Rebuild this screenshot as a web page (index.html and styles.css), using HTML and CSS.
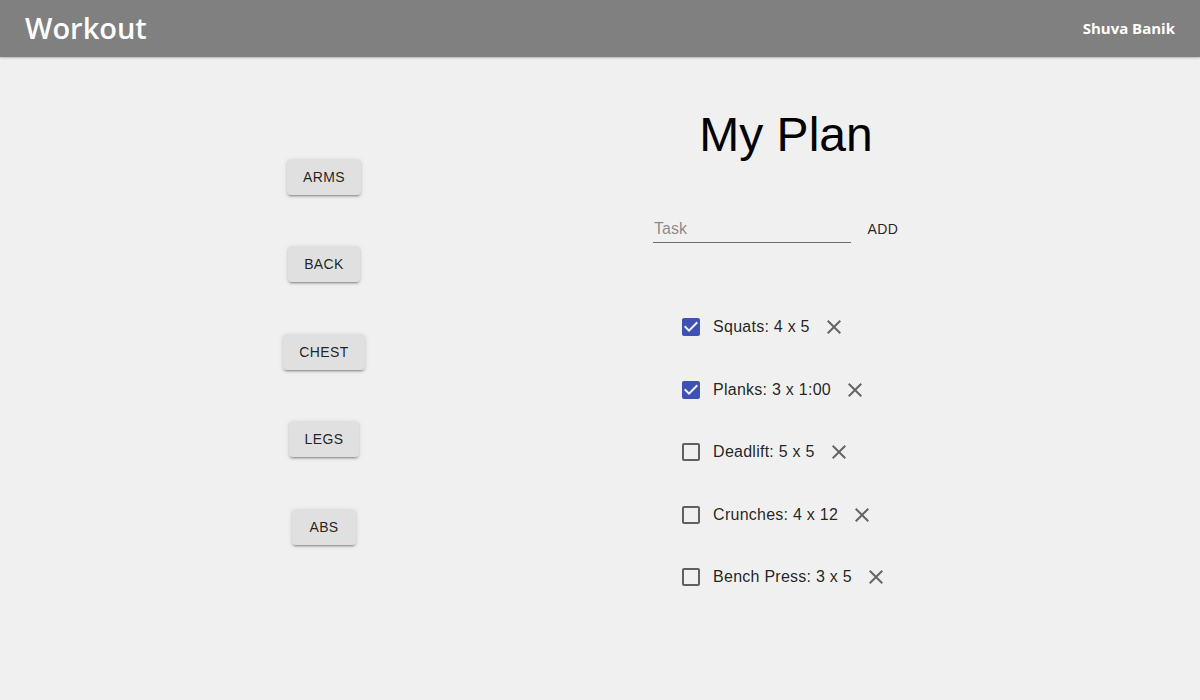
FILE: index.html
```html
<!DOCTYPE html>
<html lang="en">
<head>
<meta charset="utf-8">
<title>Workout</title>
<link rel="stylesheet" href="styles.css">
</head>
<body>
<header class="appbar">
  <div class="brand">Workout</div>
  <div class="user">Shuva Banik</div>
</header>
<main class="main">
  <nav class="categories">
    <button class="btn-contained">Arms</button>
    <button class="btn-contained">Back</button>
    <button class="btn-contained">Chest</button>
    <button class="btn-contained">Legs</button>
    <button class="btn-contained">Abs</button>
  </nav>
  <section class="plan">
    <h1 class="plan-title">My Plan</h1>
    <form class="task-form">
      <div class="input-wrap"><input class="task-input" type="text" placeholder="Task"></div>
      <button type="button" class="btn-text">Add</button>
    </form>
    <ul class="task-list">
      <li class="task">
        <span class="checkbox checked"><svg viewBox="0 0 24 24" width="24" height="24"><path d="M19 3H5c-1.11 0-2 .9-2 2v14c0 1.1.89 2 2 2h14c1.11 0 2-.9 2-2V5c0-1.1-.89-2-2-2zm-9 14l-5-5 1.41-1.41L10 14.170l7.59-7.59L19 8l-9 9z"/></svg></span>
        <span class="task-label">Squats: 4 x 5</span>
        <span class="icon-btn"><svg viewBox="0 0 24 24" width="24" height="24"><path d="M19 6.41L17.590 5 12 10.59 6.41 5 5 6.41 10.59 12 5 17.59 6.41 19 12 13.41 17.59 19 19 17.59 13.41 12z"/></svg></span>
      </li>
      <li class="task">
        <span class="checkbox checked"><svg viewBox="0 0 24 24" width="24" height="24"><path d="M19 3H5c-1.11 0-2 .9-2 2v14c0 1.1.89 2 2 2h14c1.11 0 2-.9 2-2V5c0-1.1-.89-2-2-2zm-9 14l-5-5 1.41-1.41L10 14.170l7.59-7.59L19 8l-9 9z"/></svg></span>
        <span class="task-label">Planks: 3 x 1:00</span>
        <span class="icon-btn"><svg viewBox="0 0 24 24" width="24" height="24"><path d="M19 6.41L17.590 5 12 10.59 6.41 5 5 6.41 10.59 12 5 17.59 6.41 19 12 13.41 17.59 19 19 17.59 13.41 12z"/></svg></span>
      </li>
      <li class="task">
        <span class="checkbox"><svg viewBox="0 0 24 24" width="24" height="24"><path d="M19 5v14H5V5h14m0-2H5c-1.1 0-2 .9-2 2v14c0 1.1.9 2 2 2h14c1.1 0 2-.9 2-2V5c0-1.1-.9-2-2-2z"/></svg></span>
        <span class="task-label">Deadlift: 5 x 5</span>
        <span class="icon-btn"><svg viewBox="0 0 24 24" width="24" height="24"><path d="M19 6.41L17.590 5 12 10.59 6.41 5 5 6.41 10.59 12 5 17.59 6.41 19 12 13.41 17.59 19 19 17.59 13.41 12z"/></svg></span>
      </li>
      <li class="task">
        <span class="checkbox"><svg viewBox="0 0 24 24" width="24" height="24"><path d="M19 5v14H5V5h14m0-2H5c-1.1 0-2 .9-2 2v14c0 1.1.9 2 2 2h14c1.1 0 2-.9 2-2V5c0-1.1-.9-2-2-2z"/></svg></span>
        <span class="task-label">Crunches: 4 x 12</span>
        <span class="icon-btn"><svg viewBox="0 0 24 24" width="24" height="24"><path d="M19 6.41L17.590 5 12 10.59 6.41 5 5 6.41 10.59 12 5 17.59 6.41 19 12 13.41 17.59 19 19 17.59 13.41 12z"/></svg></span>
      </li>
      <li class="task">
        <span class="checkbox"><svg viewBox="0 0 24 24" width="24" height="24"><path d="M19 5v14H5V5h14m0-2H5c-1.1 0-2 .9-2 2v14c0 1.1.9 2 2 2h14c1.1 0 2-.9 2-2V5c0-1.1-.9-2-2-2z"/></svg></span>
        <span class="task-label">Bench Press: 3 x 5</span>
        <span class="icon-btn"><svg viewBox="0 0 24 24" width="24" height="24"><path d="M19 6.41L17.590 5 12 10.59 6.41 5 5 6.41 10.59 12 5 17.59 6.41 19 12 13.41 17.59 19 19 17.59 13.41 12z"/></svg></span>
      </li>
    </ul>
  </section>
</main>
</body>
</html>
```
FILE: styles.css
```css
* { box-sizing: border-box; }

html, body {
  margin: 0;
  padding: 0;
  height: 100%;
}

body {
  background: #f0f0f0;
  font-family: "Liberation Sans", Arial, sans-serif;
  color: rgba(0, 0, 0, 0.87);
}

.appbar {
  height: 57px;
  background: #808080;
  display: flex;
  align-items: center;
  justify-content: space-between;
  padding: 0 25px 0 25px;
  box-shadow: 0 1px 2px rgba(0, 0, 0, 0.25);
  color: #fff;
  font-family: "Open Sans", sans-serif;
}

.brand {
  font-size: 29px;
  font-weight: 600;
  line-height: 1;
  margin-top: -2px;
}

.user {
  font-size: 15px;
  font-weight: 700;
  margin-top: -2px;
}

.main {
  display: grid;
  grid-template-columns: 462px 462px;
  padding-left: 93px;
}

.categories {
  display: flex;
  flex-direction: column;
  align-items: center;
  gap: 51.5px;
  padding-top: 101.5px;
}

.btn-contained {
  height: 36px;
  min-width: 64px;
  padding: 6px 16px;
  border: 0;
  border-radius: 4px;
  background: #e0e0e0;
  color: rgba(0, 0, 0, 0.87);
  font-family: "Liberation Sans", Arial, sans-serif;
  font-size: 14px;
  font-weight: 500;
  letter-spacing: 0.4px;
  text-transform: uppercase;
  box-shadow: 0 3px 1px -2px rgba(0, 0, 0, 0.2), 0 2px 2px 0 rgba(0, 0, 0, 0.14), 0 1px 5px 0 rgba(0, 0, 0, 0.12);
}

.plan {
  display: flex;
  flex-direction: column;
  align-items: center;
}

.plan-title {
  margin: 50px 0 0 0;
  font-size: 48px;
  line-height: 56px;
  font-weight: 400;
  color: #000;
}

.task-form {
  margin-top: 48px;
  display: flex;
  align-items: flex-start;
  padding-right: 4px;
}

.input-wrap {
  width: 198px;
  border-bottom: 1px solid rgba(0, 0, 0, 0.55);
}

.task-input {
  display: block;
  width: 100%;
  height: 31px;
  padding: 8px 1px 4px;
  border: 0;
  background: transparent;
  outline: none;
  font-family: "Liberation Sans", Arial, sans-serif;
  font-size: 16px;
  color: rgba(0, 0, 0, 0.87);
}

.task-input::placeholder {
  color: rgba(0, 0, 0, 0.45);
  opacity: 1;
}

.btn-text {
  height: 36px;
  min-width: 64px;
  padding: 6px 8px;
  border: 0;
  background: transparent;
  color: rgba(0, 0, 0, 0.87);
  font-family: "Liberation Sans", Arial, sans-serif;
  font-size: 14px;
  font-weight: 500;
  letter-spacing: 0.4px;
  text-transform: uppercase;
}

.task-list {
  list-style: none;
  margin: 56px 2px 0 0;
  padding: 0;
  display: flex;
  flex-direction: column;
  gap: 14.5px;
}

.task {
  display: flex;
  align-items: center;
  height: 48px;
}

.checkbox {
  display: flex;
  padding: 9px;
}

.checkbox svg { fill: rgba(0, 0, 0, 0.6); }
.checkbox.checked svg { fill: #3f51b5; }

.task-label {
  font-size: 16px;
  letter-spacing: 0.25px;
  color: rgba(0, 0, 0, 0.87);
  margin-left: 1px;
}

.icon-btn {
  display: flex;
  padding: 12px;
}

.icon-btn svg { fill: rgba(0, 0, 0, 0.58); }
```
